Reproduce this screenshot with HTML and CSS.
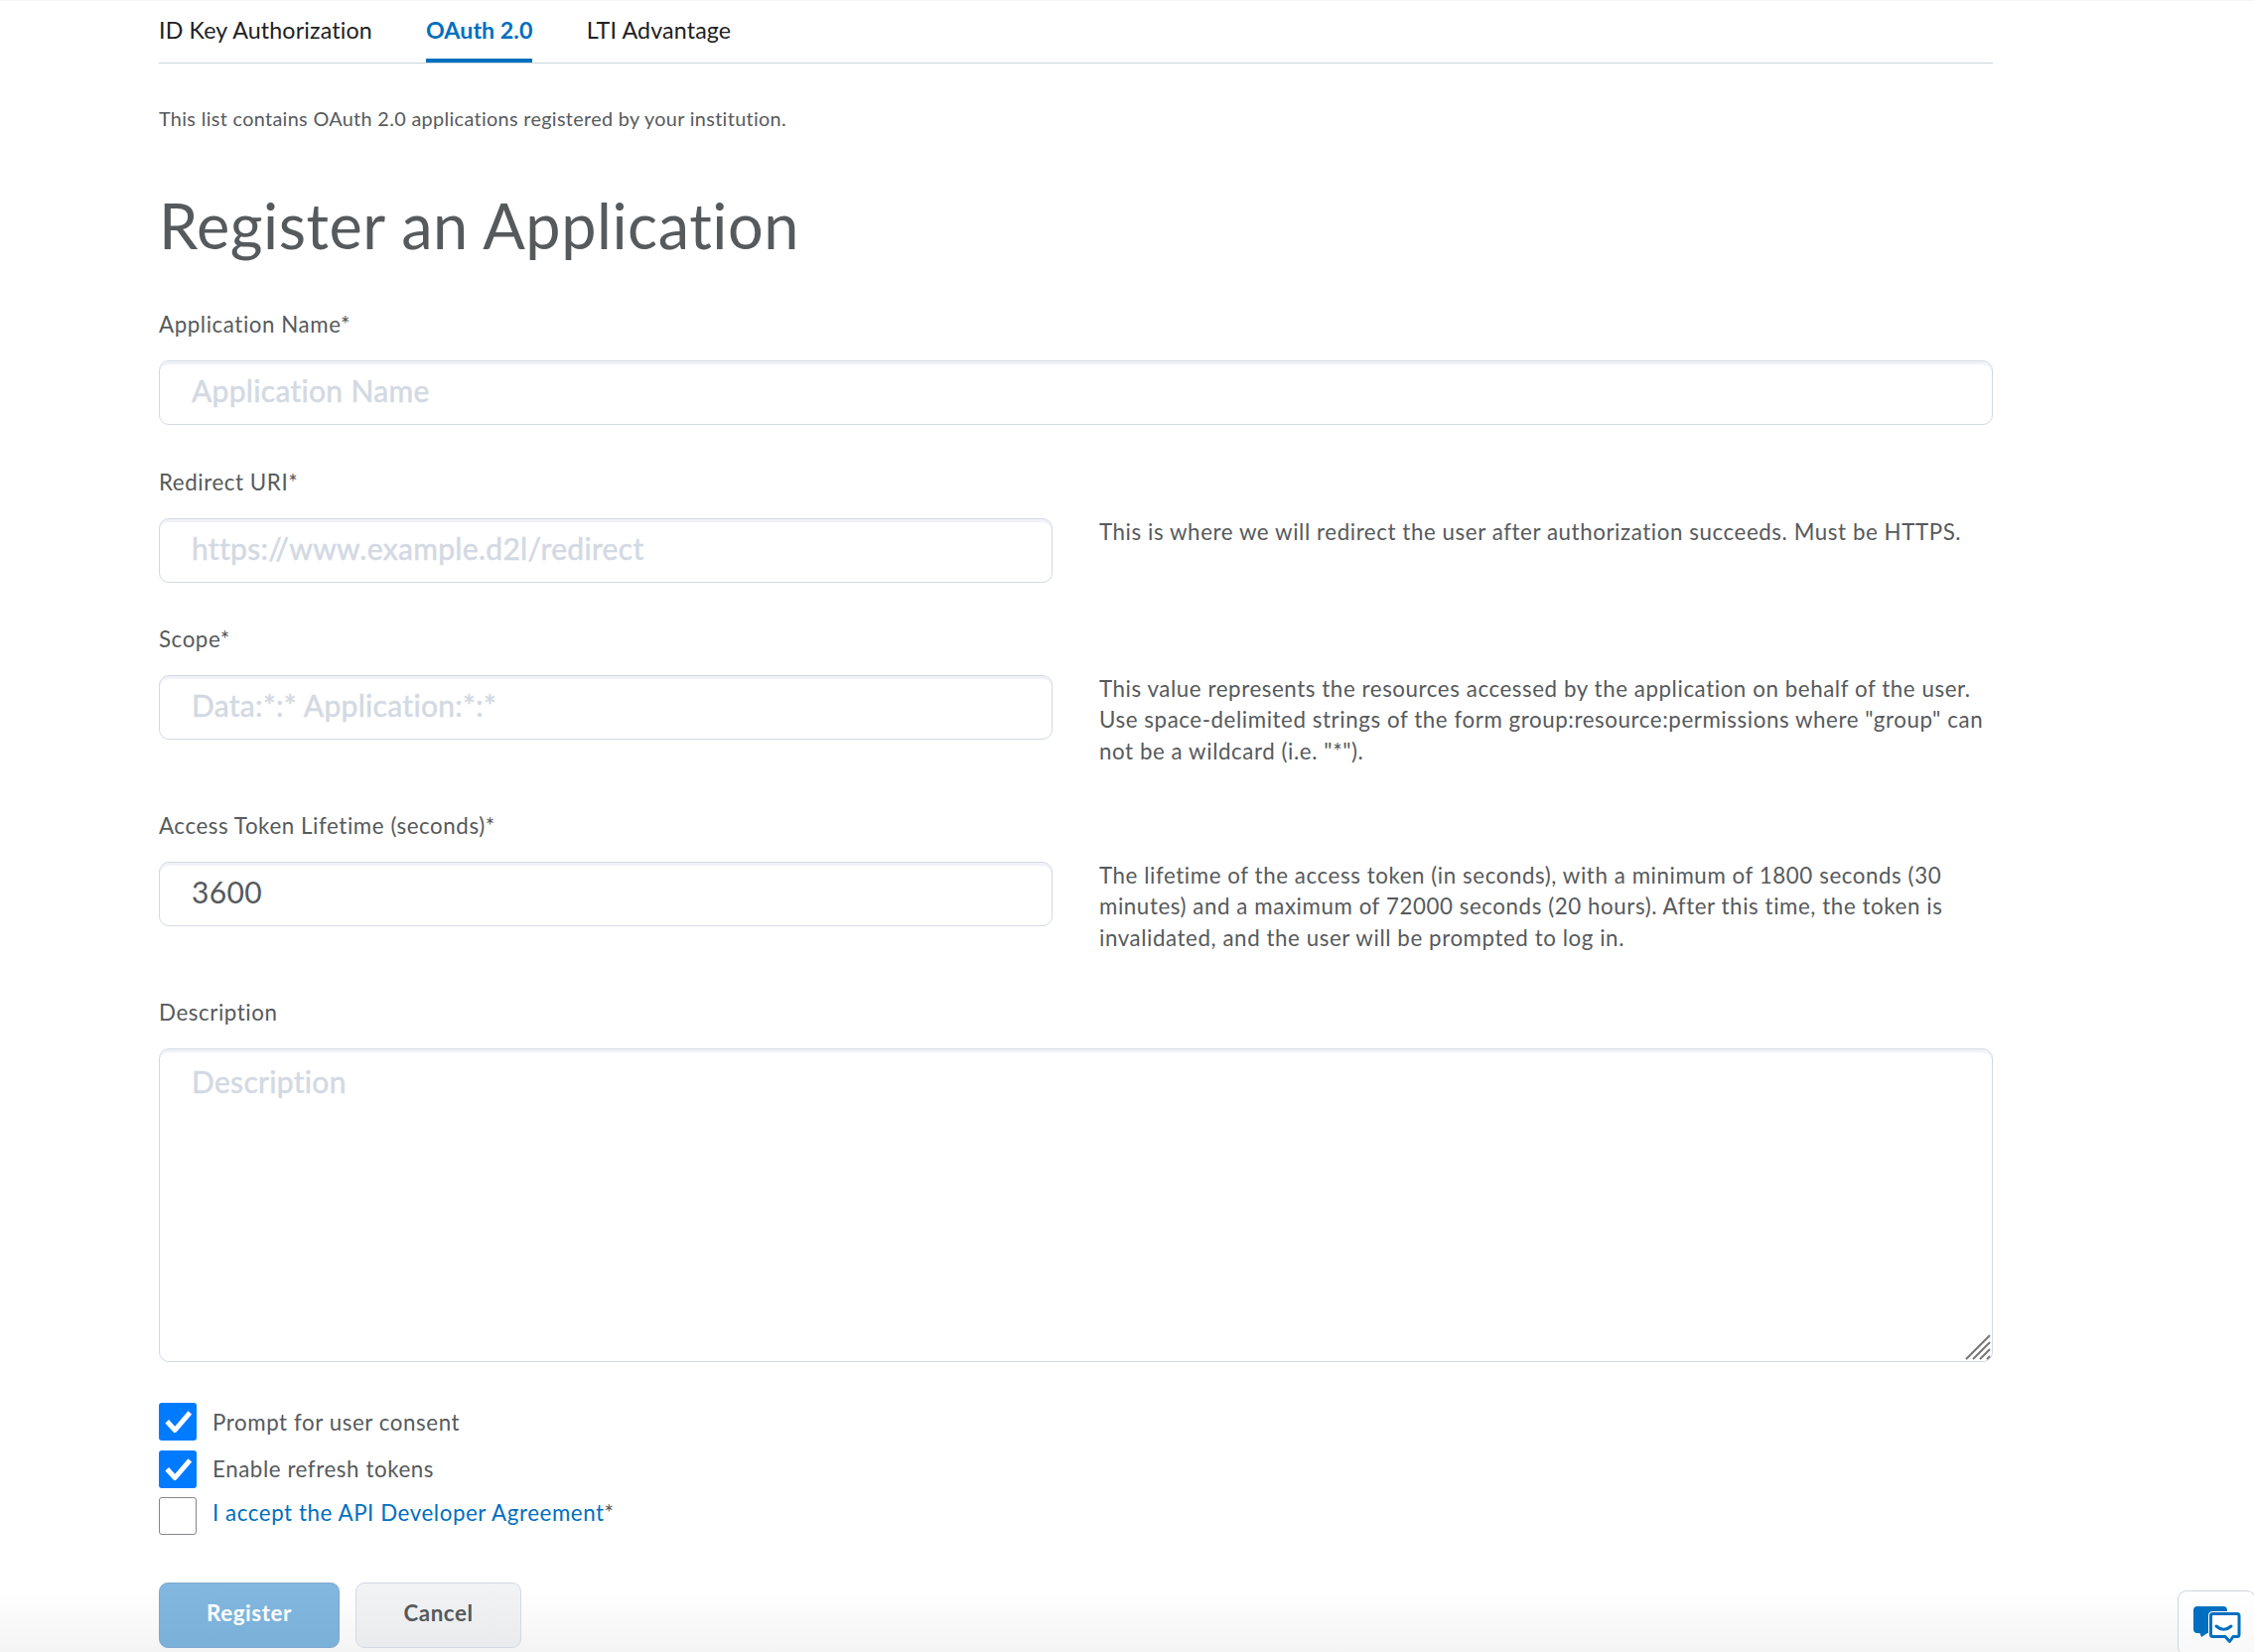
FILE: index.html
```
<!DOCTYPE html>
<html lang="en">
<head>
<meta charset="utf-8">
<title>Register an Application</title>
<link rel="stylesheet" href="styles.css">
</head>
<body>
<main class="page">
  <nav class="tabs">
    <a class="tab">ID Key Authorization</a>
    <a class="tab tab-selected">OAuth 2.0</a>
    <a class="tab">LTI Advantage</a>
  </nav>
  <p class="intro">This list contains OAuth 2.0 applications registered by your institution.</p>
  <h1 class="title">Register an Application</h1>
  <form>
    <div class="fields">
      <div class="field field-wide">
        <label class="label" for="name">Application Name*</label>
        <input class="input" id="name" type="text" placeholder="Application Name">
      </div>
      <div class="field">
        <label class="label" for="uri">Redirect URI*</label>
        <input class="input" id="uri" type="text" placeholder="https://www.example.d2l/redirect">
        <p class="help">This is where we will redirect the user after authorization succeeds. Must be HTTPS.</p>
      </div>
      <div class="field">
        <label class="label" for="scope">Scope*</label>
        <input class="input" id="scope" type="text" placeholder="Data:*:* Application:*:*">
        <p class="help">This value represents the resources accessed by the application on behalf of the user. Use space-delimited strings of the form group:resource:permissions where "group" can not be a wildcard (i.e. "*").</p>
      </div>
      <div class="field">
        <label class="label" for="lifetime">Access Token Lifetime (seconds)*</label>
        <input class="input" id="lifetime" type="text" value="3600">
        <p class="help">The lifetime of the access token (in seconds), with a minimum of 1800 seconds (30 minutes) and a maximum of 72000 seconds (20 hours). After this time, the token is invalidated, and the user will be prompted to log in.</p>
      </div>
      <div class="field field-wide">
        <label class="label" for="description">Description</label>
        <div class="area">
          <textarea class="input textarea" id="description" placeholder="Description"></textarea>
          <svg class="grip" viewBox="0 0 26 26"><path d="M1 25 25 1M8 25 25 8M15 25 25 15M22 25 25 22"/></svg>
        </div>
      </div>
    </div>
    <div class="checks">
      <label class="check"><span class="box box-on"><svg viewBox="0 0 38 38"><path d="M8.2 18.7 16.2 27.5 31.3 9.8"/></svg></span><span class="check-text">Prompt for user consent</span></label>
      <label class="check"><span class="box box-on"><svg viewBox="0 0 38 38"><path d="M8.2 18.7 16.2 27.5 31.3 9.8"/></svg></span><span class="check-text check-text-mid">Enable refresh tokens</span></label>
      <label class="check"><span class="box"></span><span class="check-text check-text-high"><a class="link">I accept the API Developer Agreement</a>*</span></label>
    </div>
    <div class="actions">
      <button class="button button-primary" type="button">Register</button>
      <button class="button" type="button">Cancel</button>
    </div>
  </form>
</main>
<div class="chat">
  <svg viewBox="0 0 50 40">
    <path class="chat-back" d="M5 1H31Q35 1 35 5V28H15L9 32 7.5 28H5Q1 28 1 24V5Q1 1 5 1Z"/>
    <path class="chat-halo" d="M20.5 8.5H45Q47 8.5 47 10.5V29.5Q47 31.5 45 31.5H41L37.5 36.5 33 31.5H20.5Q18.5 31.5 18.5 29.5V10.5Q18.5 8.5 20.5 8.5Z"/>
    <path class="chat-front" d="M20.5 8.5H45Q47 8.5 47 10.5V29.5Q47 31.5 45 31.5H41L37.5 36.5 33 31.5H20.5Q18.5 31.5 18.5 29.5V10.5Q18.5 8.5 20.5 8.5Z"/>
    <path class="chat-smile" d="M24 21Q31.500 27.500 39 21"/>
  </svg>
</div>
</body>
</html>
```
FILE: styles.css
```
* {
  box-sizing: border-box;
}

html,
body {
  margin: 0;
  height: 1664px;
  overflow: hidden;
}

body {
  background: linear-gradient(#fff 1600px, #f4f4f4 1664px);
  border-top: 1px solid #f6f6f6;
  color: #565a5c;
  font: 400 22.3px/31.3px Lato, "Liberation Sans", sans-serif;
  letter-spacing: 0.58px;
}

.page {
  width: 1847px;
  margin-left: 160px;
}

.tabs {
  display: flex;
  gap: 54.3px;
  height: 63px;
  border-bottom: 1px solid #cdd5dc;
}

.tab {
  height: 62px;
  padding-top: 14px;
  color: #202122;
  font-size: 23.2px;
  line-height: 30px;
  letter-spacing: 0.16px;
}

.tab-selected {
  border-bottom: 4px solid #006fbf;
  color: #006fbf;
  font-weight: 700;
  letter-spacing: 0.05px;
}

.intro {
  margin: 40px 0 0;
  font-size: 19.8px;
  line-height: 30px;
  letter-spacing: 0.35px;
}

.title {
  margin: 54px 0 0;
  font-size: 63px;
  font-weight: 400;
  line-height: 78px;
  letter-spacing: 0.54px;
}

.fields {
  display: grid;
  grid-template-rows: 159px 158px 188px 188px 368px;
  margin-top: 45px;
}

.field {
  display: grid;
  grid-template-columns: 900px 900px;
  grid-template-rows: 52px auto;
  column-gap: 47px;
  align-content: start;
  align-items: start;
}

.field-wide {
  grid-template-columns: 1fr;
}

.label {
  grid-column: 1 / -1;
}

.input {
  display: block;
  width: 100%;
  height: 65px;
  padding: 0 32px 5px;
  border: 1px solid #d3d9e3;
  border-radius: 10px;
  background: #fff;
  box-shadow: inset 0 3px 0 #f1f2f7;
  color: #565a5c;
  font: 400 30px/36px Lato, "Liberation Sans", sans-serif;
  letter-spacing: 0.32px;
}

.input::placeholder {
  color: #d3d9e3;
  opacity: 1;
  -webkit-text-stroke: 0.5px #d3d9e3;
}

.area {
  position: relative;
}

.textarea {
  height: 316px;
  padding-top: 14px;
  resize: none;
}

.grip {
  position: absolute;
  right: 2px;
  bottom: 2px;
  width: 26px;
  height: 26px;
  fill: none;
  stroke: #757575;
  stroke-width: 2;
}

.help {
  margin: -2px 0 0;
}

.checks {
  display: grid;
  grid-template-rows: 48px 47px 38px;
  margin-top: 41px;
}

.check {
  display: flex;
  align-items: flex-start;
  gap: 16px;
}

.box {
  width: 38px;
  height: 38px;
  border: 1px solid #85868f;
  border-radius: 3px;
  background: #fff;
}

.box-on {
  border: 0;
  background: #007aff;
}

.box svg {
  display: block;
  fill: none;
  stroke: #fff;
  stroke-width: 5;
  stroke-linejoin: round;
}

.check-text {
  padding-top: 4px;
}

.check-text-mid {
  padding-top: 3px;
}

.check-text-high {
  padding-top: 0;
}

.link {
  color: #006fbf;
}

.actions {
  display: flex;
  gap: 16px;
  margin-top: 48px;
}

.button {
  width: 167px;
  height: 66px;
  padding: 0 0 5px;
  border: 1px solid #d3d9e3;
  border-radius: 9px;
  background: linear-gradient(#f2f3f5, #eaebed);
  color: #565a5c;
  font: 700 22.3px/30px Lato, "Liberation Sans", sans-serif;
  letter-spacing: 0.6px;
}

.button-primary {
  width: 182px;
  border-color: #7fa9cf;
  background: linear-gradient(#82b7df, #7bb0d8);
  color: #fff;
}

.chat {
  position: fixed;
  right: -2px;
  bottom: -4px;
  width: 79px;
  height: 66px;
  padding: 14px;
  border: 1px solid #cdd5dc;
  border-radius: 9px;
  background: linear-gradient(#fff, #f8f8f8);
}

.chat svg {
  display: block;
  width: 50px;
  height: 40px;
  fill: none;
}

.chat .chat-back {
  fill: #006fbf;
}

.chat .chat-halo {
  fill: #fff;
  stroke: #fff;
  stroke-width: 5;
}

.chat .chat-front {
  stroke: #006fbf;
  stroke-width: 3;
  stroke-linejoin: round;
}

.chat .chat-smile {
  stroke: #006fbf;
  stroke-width: 3;
  stroke-linecap: round;
}
```
